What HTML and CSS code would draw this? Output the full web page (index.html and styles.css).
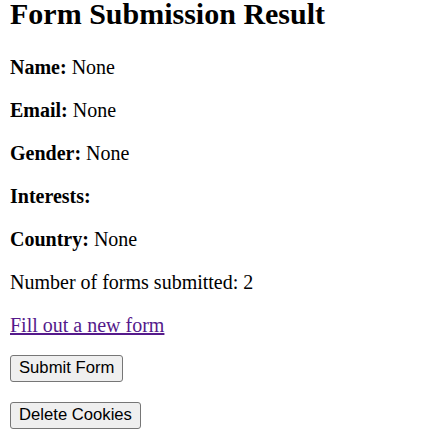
FILE: index.html
```html
<!DOCTYPE html>
<html>
<head>
<meta charset="utf-8">
<title>Form Submission Result</title>
<link rel="stylesheet" href="styles.css">
</head>
<body>
<h2 class="title">Form Submission Result</h2>
<p class="row"><strong>Name:</strong> None</p>
<p class="row"><strong>Email:</strong> None</p>
<p class="row"><strong>Gender:</strong> None</p>
<p class="row"><strong>Interests:</strong> </p>
<p class="row"><strong>Country:</strong> None</p>
<p class="row">Number of forms submitted: 2</p>
<p class="row row-last"><a class="link" href="#">Fill out a new form</a></p>
<form class="form"><button type="button" class="btn">Submit Form</button></form>
<form class="form"><button type="button" class="btn">Delete Cookies</button></form>
</body>
</html>
```
FILE: styles.css
```css
html, body {
  background: #ffffff;
}
body {
  margin: 0 10px;
  font-family: "Liberation Serif", "Times New Roman", serif;
  font-size: 20px;
  color: #000000;
}
.title {
  font-size: 30px;
  font-weight: bold;
  line-height: 28px;
  margin: 0 0 28px;
}
.row {
  margin: 20px 0;
}
.row-last {
  margin-bottom: 18px;
}
.link {
  color: #551a8b;
  text-decoration: underline;
}
.form {
  margin: 0 0 20px;
}
.btn {
  font-family: "Liberation Sans", Arial, sans-serif;
  font-size: 16.67px;
  color: #000000;
  background: #efefef;
  border: 1px solid #767676;
  border-radius: 3px;
  padding: 2px 8px 3px;
  margin: 0;
  line-height: normal;
}
```
